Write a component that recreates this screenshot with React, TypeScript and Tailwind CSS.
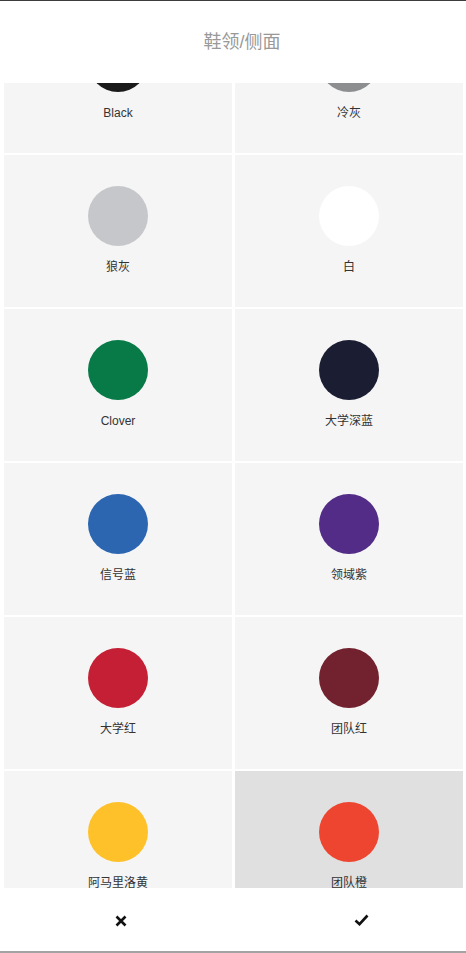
import { useState } from "react"

const colors = [
    { name: "Black", hex: "#1a1a1a" },
    { name: "冷灰", hex: "#8d8e90" },
    { name: "狼灰", hex: "#c5c7ca" },
    { name: "白", hex: "#ffffff" },
    { name: "Clover", hex: "#077a48" },
    { name: "大学深蓝", hex: "#1b1e32" },
    { name: "信号蓝", hex: "#2c66b0" },
    { name: "领域紫", hex: "#522c86" },
    { name: "大学红", hex: "#c41f35" },
    { name: "团队红", hex: "#71222e" },
    { name: "阿马里洛黄", hex: "#fec12a" },
    { name: "团队橙", hex: "#ee4531" },
]

export default function App() {
    const [selected, setSelected] = useState("团队橙")

    return (
        <div
            className="relative h-[953px] w-[466px] overflow-hidden bg-white border-t border-t-[#3c3c3c] border-b-2 border-b-[#a3a3a3]"
            style={{ fontFamily: '"Liberation Sans", Arial, "Noto Sans CJK SC", sans-serif' }}
        >
            <div className="grid grid-cols-[228px_228px] gap-x-[3px] gap-y-[2px] pl-[4px]">
                {colors.map((c) => (
                    <button
                        key={c.name}
                        onClick={() => setSelected(c.name)}
                        className={
                            "h-[152px] flex flex-col items-center pt-[31px] cursor-pointer " +
                            (selected === c.name ? "bg-[#e0e0e0]" : "bg-[#f5f5f5]")
                        }
                    >
                        <span
                            className="block h-[60px] w-[60px] rounded-full"
                            style={{ backgroundColor: c.hex }}
                        />
                        <span className="mt-[13px] text-[12px] leading-[16px] text-[#333]">{c.name}</span>
                    </button>
                ))}
            </div>

            <div className="absolute top-0 left-0 right-0 h-[82px] bg-white flex items-center justify-center pl-[18px]">
                <span className="text-[18px] text-[#999] pt-[1px]">鞋领/侧面</span>
            </div>

            {/* action bar */}
            <div className="absolute bottom-0 left-0 right-0 h-[63px] bg-white grid grid-cols-[240px_240px] pl-[1px]">
                <button className="flex items-center justify-center pt-[2px] cursor-pointer">
                    <svg width="12" height="12" viewBox="0 0 12 12">
                        <path d="M1.5 1.5 L10.5 10.5 M10.5 1.5 L1.5 10.5" stroke="#111" strokeWidth="2.6" />
                    </svg>
                </button>
                <button className="flex items-center justify-center cursor-pointer">
                    <svg width="15" height="12" viewBox="0 0 15 12">
                        <path d="M1.5 6.5 L5.5 10.2 L13.5 1.5" stroke="#111" strokeWidth="2.6" fill="none" />
                    </svg>
                </button>
            </div>
        </div>
    )
}
